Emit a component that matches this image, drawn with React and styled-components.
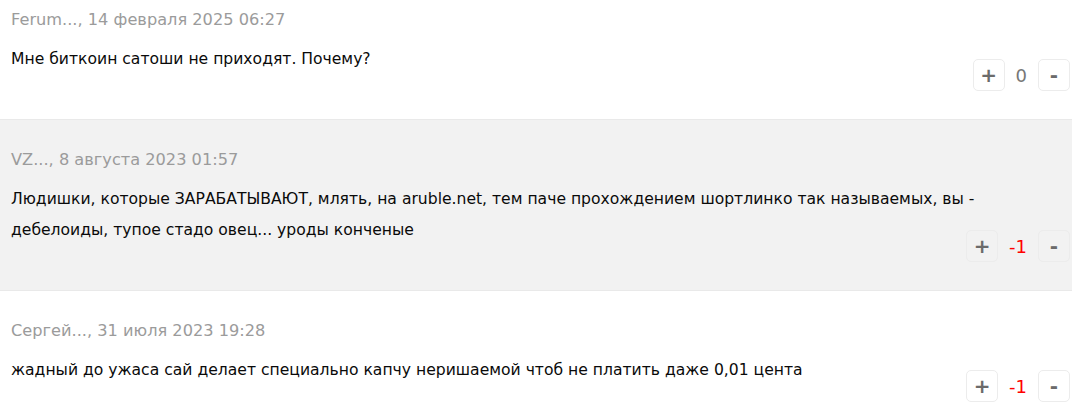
import React from "react";
import styled, { createGlobalStyle } from "styled-components";

const Global = createGlobalStyle`
  html, body { margin: 0; padding: 0; background: #fff; }
  body { font-family: "DejaVu Sans", Verdana, sans-serif; overflow: hidden; }
`;

const List = styled.div`
  width: 1072px;
  margin-top: -20px;
`;

const Row = styled.div`
  padding: 24px 2px 28px 11px;
  background: ${(p) => (p.$shaded ? "#f2f2f2" : "#fff")};
  border-bottom: 1px solid #e9e9e9;
`;

const Meta = styled.div`
  font-size: 16.2px;
  line-height: 32px;
  color: #9b9b9b;
  margin-bottom: 8px;
`;

const Text = styled.div`
  font-size: 15.6px;
  line-height: 31px;
  color: #0a0a0a;
  padding-right: 10px;
`;

const Votes = styled.div`
  display: flex;
  justify-content: flex-end;
  align-items: center;
  margin-top: -16px;
`;

const VoteButton = styled.button`
  width: 32px;
  height: 32px;
  padding: 0;
  border: 1px solid #ececec;
  border-radius: 5px;
  background: ${(p) => (p.$shaded ? "#f2f2f2" : "#fff")};
  color: #6b6b6b;
  font-family: "DejaVu Sans", Verdana, sans-serif;
  font-size: 20px;
  font-weight: bold;
  line-height: 30px;
  cursor: pointer;
`;

const Count = styled.span`
  padding: 0 11px;
  font-size: 18px;
  color: ${(p) => (p.$negative ? "#ff0000" : "#777")};
`;

const comments = [
  {
    meta: "Ferum..., 14 февраля 2025 06:27",
    text: "Мне биткоин сатоши не приходят. Почему?",
    score: 0,
  },
  {
    meta: "VZ..., 8 августа 2023 01:57",
    text: "Людишки, которые ЗАРАБАТЫВАЮТ, млять, на aruble.net, тем паче прохождением шортлинко так называемых, вы - дебелоиды, тупое стадо овец... уроды конченые",
    score: -1,
    shaded: true,
  },
  {
    meta: "Сергей..., 31 июля 2023 19:28",
    text: "жадный до ужаса сай делает специально капчу неришаемой чтоб не платить даже 0,01 цента",
    score: -1,
  },
];

export default function App() {
  return (
    <>
      <Global />
      <List>
        {comments.map((c, i) => (
          <Row key={i} $shaded={c.shaded}>
            <Meta>{c.meta}</Meta>
            <Text>{c.text}</Text>
            <Votes>
              <VoteButton $shaded={c.shaded}>+</VoteButton>
              <Count $negative={c.score < 0}>{c.score}</Count>
              <VoteButton $shaded={c.shaded}>-</VoteButton>
            </Votes>
          </Row>
        ))}
      </List>
    </>
  );
}
